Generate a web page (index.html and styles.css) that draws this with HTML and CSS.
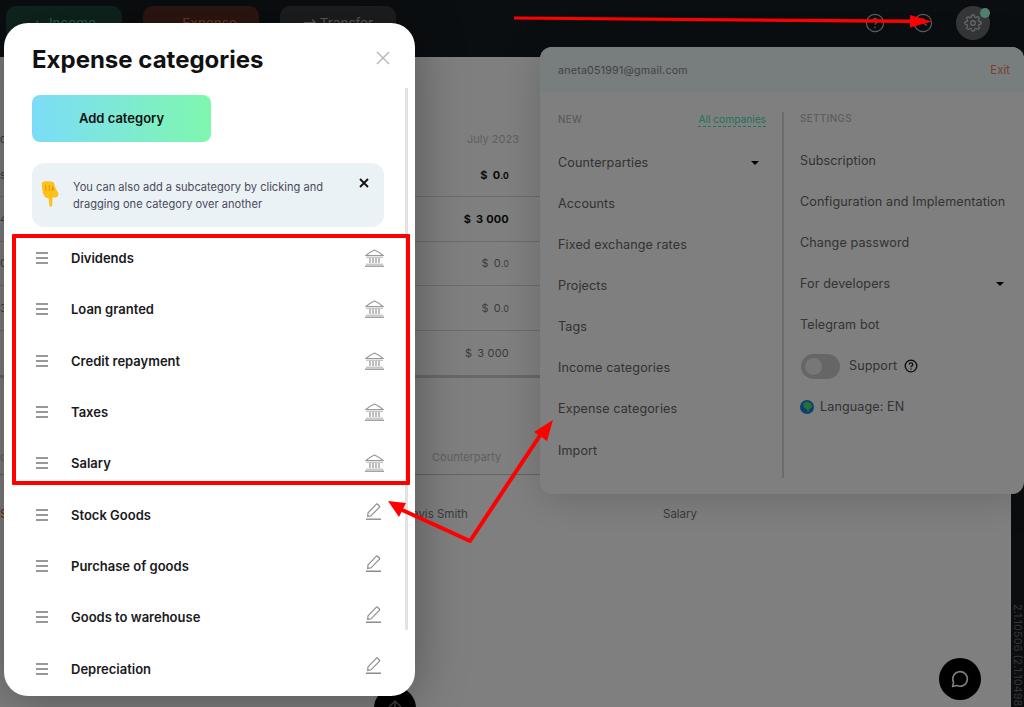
FILE: index.html
```html
<!DOCTYPE html>
<html lang="en">
<head>
<meta charset="utf-8">
<title>Expense categories</title>
<link rel="stylesheet" href="styles.css">
</head>
<body>
<svg class="defs" width="0" height="0" aria-hidden="true">
  <symbol id="i-bank" viewBox="0 0 19 18">
    <path d="M1 6.500C4 4 7 2 9.500 1 12 2 15 4 18 6.500Z" fill="none" stroke="currentColor" stroke-width="1.200"/>
    <path d="M5 9v5M8 9v5M11 9v5M14 9v5" fill="none" stroke="currentColor" stroke-width="1.300"/>
    <path d="M1 8.200h17M1 15.200h17" fill="none" stroke="currentColor" stroke-width=".8"/>
    <path d="M0 17.200h19" fill="none" stroke="currentColor" stroke-width="1.400"/>
  </symbol>
  <symbol id="i-pen" viewBox="0 0 15 17">
    <path d="M2 9.800 10.200 1.300a1 1 0 0 1 1.400 0l1.700 1.700a1 1 0 0 1 0 1.400L5 12.800l-3.300.6Z" fill="none" stroke="currentColor" stroke-width="1.200"/>
    <path d="M0 16.200h15" fill="none" stroke="currentColor" stroke-width="1.400"/>
  </symbol>
  <symbol id="i-burger" viewBox="0 0 12 12">
    <path d="M0 1h12M0 6h12M0 11h12" fill="none" stroke="currentColor" stroke-width="1.500"/>
  </symbol>
</svg>

<div class="app">
  <header class="topbar">
    <div class="tb-btn tb-income"><span class="tb-sign">+</span>Income</div>
    <div class="tb-btn tb-expense"><span class="tb-sign">—</span>Expense</div>
    <div class="tb-btn tb-transfer"><span class="tb-sign">⇄</span>Transfer</div>
    <svg class="tb-icon tb-help" width="20" height="20" viewBox="0 0 20 20"><circle cx="10" cy="10" r="8.600" fill="none" stroke="currentColor" stroke-width="1.200"/><path d="M7.600 7.800a2.400 2.400 0 1 1 3.600 2.100c-.8.500-1.200.9-1.200 1.800" fill="none" stroke="currentColor" stroke-width="1.200"/><circle cx="10" cy="14.400" r=".8" fill="currentColor"/></svg>
    <svg class="tb-icon tb-clock" width="20" height="20" viewBox="0 0 20 20"><circle cx="10" cy="10" r="8.600" fill="none" stroke="currentColor" stroke-width="1.200"/><path d="M10 5v5l4 2.400" fill="none" stroke="currentColor" stroke-width="1.200"/></svg>
    <div class="tb-gear">
      <svg width="18" height="18" viewBox="0 0 24 24" fill="none" stroke="currentColor" stroke-width="1.700"><circle cx="12" cy="12" r="3"/><path d="M19.400 15a1.650 1.650 0 0 0 .33 1.820l.06.06a2 2 0 0 1 0 2.830 2 2 0 0 1-2.830 0l-.06-.06a1.650 1.650 0 0 0-1.820-.33 1.650 1.650 0 0 0-1 1.510V21a2 2 0 0 1-2 2 2 2 0 0 1-2-2v-.09A1.650 1.650 0 0 0 9 19.400a1.650 1.650 0 0 0-1.820.33l-.06.06a2 2 0 0 1-2.830 0 2 2 0 0 1 0-2.830l.06-.06a1.650 1.650 0 0 0 .33-1.820 1.650 1.650 0 0 0-1.510-1H3a2 2 0 0 1-2-2 2 2 0 0 1 2-2h.09A1.650 1.650 0 0 0 4.600 9a1.650 1.650 0 0 0-.33-1.820l-.06-.06a2 2 0 0 1 0-2.830 2 2 0 0 1 2.830 0l.06.06a1.650 1.650 0 0 0 1.820.33H9a1.650 1.650 0 0 0 1-1.510V3a2 2 0 0 1 2-2 2 2 0 0 1 2 2v.09a1.650 1.650 0 0 0 1 1.510 1.650 1.650 0 0 0 1.820-.33l.06-.06a2 2 0 0 1 2.830 0 2 2 0 0 1 0 2.830l-.06.06a1.650 1.650 0 0 0-.33 1.820V9a1.650 1.650 0 0 0 1.510 1H21a2 2 0 0 1 2 2 2 2 0 0 1-2 2h-.09a1.650 1.650 0 0 0-1.510 1z"/></svg>
      <span class="tb-badge"></span>
    </div>
  </header>

  <div class="main">
    <main class="content">
      <div class="sum-head"><span class="sum-label">c</span><span>July 2023</span></div>
      <div class="sum-row sum-strong"><span class="sum-label">s</span><span class="sum-val"><span class="cur">$</span>0<small>.0</small></span></div>
      <div class="sum-row sum-strong"><span class="sum-label">4</span><span class="sum-val"><span class="cur">$</span>3 000</span></div>
      <div class="sum-row"><span class="sum-label">0</span><span class="sum-val"><span class="cur">$</span>0<small>.0</small></span></div>
      <div class="sum-row"><span class="sum-label">3</span><span class="sum-val"><span class="cur">$</span>0<small>.0</small></span></div>
      <div class="sum-row sum-total"><span class="sum-label"></span><span class="sum-val"><span class="cur">$</span>3 000</span></div>
      <div class="tx-head"><span class="tx-stub">c</span><span>Counterparty</span></div>
      <div class="tx-row"><span class="tx-first">S</span><span>Travis Smith</span><span>Salary</span></div>
    </main>
    <aside class="strip">2.1.10506 (2.1.10498</aside>
  </div>

  <section class="menu">
    <div class="menu-top"><span>aneta051991@gmail.com</span><span class="menu-exit">Exit</span></div>
    <div class="menu-body">
      <div class="menu-col menu-left">
        <div class="menu-cap"><span>NEW</span><span class="menu-all">All companies</span></div>
        <div class="menu-item">Counterparties<span class="caret"></span></div>
        <div class="menu-item">Accounts</div>
        <div class="menu-item">Fixed exchange rates</div>
        <div class="menu-item">Projects</div>
        <div class="menu-item">Tags</div>
        <div class="menu-item">Income categories</div>
        <div class="menu-item">Expense categories</div>
        <div class="menu-item">Import</div>
      </div>
      <div class="menu-col menu-right">
        <div class="menu-cap"><span>SETTINGS</span></div>
        <div class="menu-item">Subscription</div>
        <div class="menu-item">Configuration and Implementation</div>
        <div class="menu-item">Change password</div>
        <div class="menu-item">For developers<span class="caret"></span></div>
        <div class="menu-item">Telegram bot</div>
        <div class="menu-item menu-support">
          <span class="toggle"><span class="knob"></span></span>Support
          <svg class="sup-help" width="14" height="14" viewBox="0 0 14 14"><circle cx="7" cy="7" r="5.800" fill="none" stroke="currentColor" stroke-width="1.300"/><path d="M5.300 5.600a1.700 1.700 0 1 1 2.600 1.400c-.6.400-.9.600-.9 1.300" fill="none" stroke="currentColor" stroke-width="1.200"/><circle cx="7" cy="10" r=".7" fill="currentColor"/></svg>
        </div>
        <div class="menu-item menu-lang">
          <svg width="14" height="14" viewBox="0 0 14 14"><circle cx="7" cy="7" r="7" fill="#1a7fd6"/><path d="M3 3.500 7 1.500l4 2 1.500 3.500-2.500 1.500L8 12.500 6.500 9 4 7.500Z" fill="#4fe07a"/></svg>Language: EN
        </div>
      </div>
    </div>
  </section>

  <button class="fab fab-chat" aria-label="Chat">
    <svg width="20" height="20" viewBox="0 0 20 20"><path d="M2.500 17.500 3.600 13.400A7.300 7.300 0 1 1 6.600 16.400Z" fill="none" stroke="#fff" stroke-width="1.600" stroke-linejoin="round"/></svg>
  </button>
  <button class="fab fab-up" aria-label="Up">
    <svg width="18" height="18" viewBox="0 0 18 18"><path d="M9 17V2M3 8l6-6 6 6" fill="none" stroke="#777" stroke-width="1.500"/></svg>
  </button>

  <div class="backdrop"></div>

  <section class="modal">
    <div class="modal-head">
      <h1>Expense categories</h1>
      <svg class="modal-close" width="14" height="14" viewBox="0 0 14 14"><path d="M1 1l12 12M13 1 1 13" fill="none" stroke="currentColor" stroke-width="1.400"/></svg>
    </div>
    <button class="add-btn">Add category</button>
    <div class="tip">
      <svg class="tip-hand" width="20" height="28" viewBox="0 0 22 30">
        <path d="M2 2.500C5 0.500 11 0.500 15 2L17 8.500 20 13.500C21 16 19.500 18.500 16.500 18.800L13.800 18.800 13.400 27.500C13.200 29.600 10.400 29.600 10.200 27.500L9.500 20 5.800 18.500C3.500 16 2 11 2 2.500Z" fill="#fcc21b"/>
        <path d="M6 5 6.500 12M10 5 10.400 12" fill="none" stroke="#e59600" stroke-width="1"/>
        <path d="M14 5.500 15.800 10.500 12.500 11.500Z" fill="#e59600"/>
      </svg>
      <p>You can also add a subcategory by clicking and dragging one category over another</p>
      <svg class="tip-close" width="10" height="10" viewBox="0 0 10 10"><path d="M1 1l8 8M9 1 1 9" fill="none" stroke="currentColor" stroke-width="1.800"/></svg>
    </div>
    <ul class="cats">
      <li class="cat"><svg class="burger" width="12" height="12"><use href="#i-burger"/></svg><span class="cat-name">Dividends</span><svg class="cat-bank" width="19" height="18"><use href="#i-bank"/></svg></li>
      <li class="cat"><svg class="burger" width="12" height="12"><use href="#i-burger"/></svg><span class="cat-name">Loan granted</span><svg class="cat-bank" width="19" height="18"><use href="#i-bank"/></svg></li>
      <li class="cat"><svg class="burger" width="12" height="12"><use href="#i-burger"/></svg><span class="cat-name">Credit repayment</span><svg class="cat-bank" width="19" height="18"><use href="#i-bank"/></svg></li>
      <li class="cat"><svg class="burger" width="12" height="12"><use href="#i-burger"/></svg><span class="cat-name">Taxes</span><svg class="cat-bank" width="19" height="18"><use href="#i-bank"/></svg></li>
      <li class="cat"><svg class="burger" width="12" height="12"><use href="#i-burger"/></svg><span class="cat-name">Salary</span><svg class="cat-bank" width="19" height="18"><use href="#i-bank"/></svg></li>
      <li class="cat"><svg class="burger" width="12" height="12"><use href="#i-burger"/></svg><span class="cat-name">Stock Goods</span><svg class="cat-pen" width="15" height="17"><use href="#i-pen"/></svg></li>
      <li class="cat"><svg class="burger" width="12" height="12"><use href="#i-burger"/></svg><span class="cat-name">Purchase of goods</span><svg class="cat-pen" width="15" height="17"><use href="#i-pen"/></svg></li>
      <li class="cat"><svg class="burger" width="12" height="12"><use href="#i-burger"/></svg><span class="cat-name">Goods to warehouse</span><svg class="cat-pen" width="15" height="17"><use href="#i-pen"/></svg></li>
      <li class="cat"><svg class="burger" width="12" height="12"><use href="#i-burger"/></svg><span class="cat-name">Depreciation</span><svg class="cat-pen" width="15" height="17"><use href="#i-pen"/></svg></li>
    </ul>
    <span class="modal-scroll"></span>
  </section>

  <div class="red-box"></div>
  <svg class="arrows" width="1024" height="707" viewBox="0 0 1024 707">
    <path d="M514 16.500 910 19.500V15L932 21.500 910 27.500V23L514 19.500Z" fill="#f00"/>
    <path d="M400 509 470 541 541 434" fill="none" stroke="#f00" stroke-width="4" stroke-linejoin="round"/>
    <path d="M553 420 534 432 547 441Z" fill="#f00"/>
    <path d="M388 501 406 503 399 517Z" fill="#f00"/>
  </svg>
</div>
</body>
</html>
```
FILE: styles.css
```css
* { box-sizing: border-box; }
html, body { margin: 0; height: 100%; }
body { font-family: Inter, "Noto Sans", "Liberation Sans", sans-serif; color: #222; background: #fff; overflow: hidden; }
.defs { position: absolute; }

.app { position: relative; width: 1024px; height: 707px; overflow: hidden; display: flex; flex-direction: column; background: #fff; }

/* top bar */
.topbar { height: 57px; flex: none; display: flex; align-items: flex-start; padding: 6px 34px 0 6px; background: #161c20; }
.tb-btn { width: 116px; height: 34px; margin-right: 21px; border-radius: 10px; display: flex; justify-content: center; align-items: center; gap: 7px; font-size: 13.500px; line-height: 32px; }
.tb-sign { width: 10px; text-align: center; font-size: 16px; }
.tb-income { background: #1c4a3a; color: #3bd08a; }
.tb-expense { background: #5c2c22; color: #f0694a; }
.tb-transfer { margin-right: 0; background: #3a3d40; color: #b5b8ba; }
.tb-icon { color: #b9bcbd; margin-top: 7px; }
.tb-help { margin-left: auto; }
.tb-clock { margin-left: 28px; }
.tb-gear { position: relative; width: 34px; height: 34px; margin-left: 23px; border-radius: 50%; background: #6a6d6f; color: #d0d2d3; display: flex; align-items: center; justify-content: center; }
.tb-badge { position: absolute; right: 0; top: 2px; width: 10px; height: 10px; border-radius: 50%; background: #a0ffe0; }

/* page behind */
.main { flex: 1; display: flex; min-height: 0; }
.content { flex: 1; min-width: 0; font-size: 11px; color: #777; }
.sum-head { margin-top: 72px; height: 24px; width: 519px; display: flex; justify-content: space-between; color: #c0c0c0; font-size: 11px; line-height: 20px; }
.sum-row { display: flex; justify-content: space-between; align-items: center; width: 540px; height: 44.400px; border-bottom: 1px solid #d8d8d8; }
.sum-label { width: 4px; color: #777; white-space: nowrap; }
.sum-val { width: 536px; padding-right: 31px; text-align: right; letter-spacing: .2px; color: #777; }
.sum-val small { font-size: 8.500px; }
.cur { margin-right: 5px; }
.sum-strong .sum-val { color: #111; font-weight: 700; }
.sum-total { height: 47.400px; border-bottom: 3px solid #d0d0d0; }
.tx-head { width: 540px; height: 97px; display: flex; padding-top: 69px; line-height: 20px; color: #c0c0c0; font-size: 11px; border-bottom: 1px solid #c8c8c8; }
.tx-stub { width: 432px; }
.tx-row { display: grid; grid-template-columns: 401px 262px auto; margin-top: 31px; line-height: 16px; color: #777; font-size: 11.500px; }
.tx-first { color: #e0452a; }
.strip { width: 13px; flex: none; background: #161c20; color: #686c6e; font-size: 11px; line-height: 13px; writing-mode: vertical-rl; padding-top: 547px; white-space: nowrap; overflow: hidden; }

/* settings menu */
.menu { position: absolute; left: 540px; top: 47px; width: 484px; height: 447px; border-radius: 12px; background: #fff; box-shadow: 0 4px 40px rgba(0,0,0,.18); overflow: hidden; font-size: 12.600px; color: #666; }
.menu-top { height: 45px; padding: 1px 14px 0 18px; display: flex; align-items: center; justify-content: space-between; background: #f0fbfb; font-size: 10.700px; color: #888; letter-spacing: .2px; }
.menu-exit { color: #ff7a5a; font-size: 11.500px; letter-spacing: 0; }
.menu-body { display: flex; }
.menu-left { width: 244px; padding: 0 16px 0 18px; border-right: 2px solid #d8d8d8; height: 366px; margin-top: 20px; }
.menu-right { flex: 1; min-width: 0; padding: 0 17px 0 16px; margin-top: 19px; }
.menu-cap { height: 15px; display: flex; justify-content: space-between; align-items: center; font-size: 9.800px; font-weight: 500; color: #b8b8b8; letter-spacing: .4px; }
.menu-all { font-size: 10.200px; font-weight: 400; letter-spacing: 0; color: #36e8b8; border-bottom: 1px dashed #36e8b8; line-height: 13px; }
.menu-item { height: 41.150px; display: flex; align-items: center; justify-content: space-between; line-height: 18px; letter-spacing: .1px; white-space: nowrap; }
.menu-left .menu-cap + .menu-item { margin-top: 15px; }
.menu-right .menu-cap + .menu-item { margin-top: 14px; }
.caret { width: 0; height: 0; border: 4px solid transparent; border-top: 4px solid #000; border-bottom: 0; }
.menu-left .caret { margin-right: 7px; }
.menu-right .caret { margin-right: 3px; }
.menu-support { justify-content: flex-start; }
.toggle { width: 39px; height: 25px; border-radius: 13px; background: #ccc; display: flex; align-items: center; padding-left: 4px; margin: 0 9px 0 1px; }
.knob { width: 17px; height: 17px; border-radius: 50%; background: #eee; }
.sup-help { margin-left: 7px; color: #111; }
.menu-lang { justify-content: flex-start; gap: 6px; }

/* floating buttons */
.fab { position: absolute; width: 42px; height: 42px; border: 0; padding: 0; border-radius: 50%; background: #000; display: flex; align-items: center; justify-content: center; }
.fab-chat { left: 939px; top: 658px; }
.fab-up { left: 374px; top: 687px; }

.backdrop { position: absolute; inset: 0; background: rgba(0,0,0,.5); }

/* modal */
.modal { position: absolute; left: 4px; top: 23px; width: 411px; height: 673px; padding: 0 31px 0 28px; border-radius: 24px; background: #fff; box-shadow: 0 4px 50px rgba(0,0,0,.35); overflow: hidden; display: flex; flex-direction: column; }
.modal-head { height: 72px; flex: none; display: flex; align-items: center; justify-content: space-between; padding-top: 1px; }
.modal-head h1 { margin: 0; font-size: 24px; font-weight: 700; color: #111; line-height: 70px; }
.modal-close { color: #b5b5b5; margin: -3px -6px 0 0; }
.add-btn { width: 179px; height: 47px; flex: none; border: 0; border-radius: 8px; padding: 0 0 2px; background: linear-gradient(90deg, #7cdcf8, #7ff7ae); font: 600 13px Inter, "Noto Sans", sans-serif; color: #111; margin-bottom: 21px; }
.tip { height: 64px; flex: none; border-radius: 12px; background: #ebf2f6; display: flex; align-items: flex-start; padding: 16px 0 0 8px; }
.tip p { margin: 0 0 0 13px; width: 272px; font-size: 11.100px; line-height: 17px; color: #4a4a5a; }
.tip-close { color: #111; margin: -1px 0 0 14px; }
.tip-hand { margin-top: 1px; }
.cats { list-style: none; margin: 5.400px 0 0; padding: 0; }
.cat { height: 51.330px; display: flex; align-items: center; }
.burger { color: #777; margin-left: 4px; flex: none; }
.cat-name { margin-left: 23px; flex: 1; font-size: 13px; font-weight: 600; color: #1a1a22; }
.cat-bank { color: #999; flex: none; }
.cat-pen { color: #8c8c8c; flex: none; margin: -6px 3px 0 0; }
.modal-scroll { position: absolute; left: 401px; top: 65px; width: 3px; height: 542px; background: #e2e2e2; }

/* annotation overlays */
.red-box { position: absolute; left: 12px; top: 234px; width: 398px; height: 251px; border: 4px solid #f00; border-radius: 1px; }
.arrows { position: absolute; left: 0; top: 0; pointer-events: none; }
```
